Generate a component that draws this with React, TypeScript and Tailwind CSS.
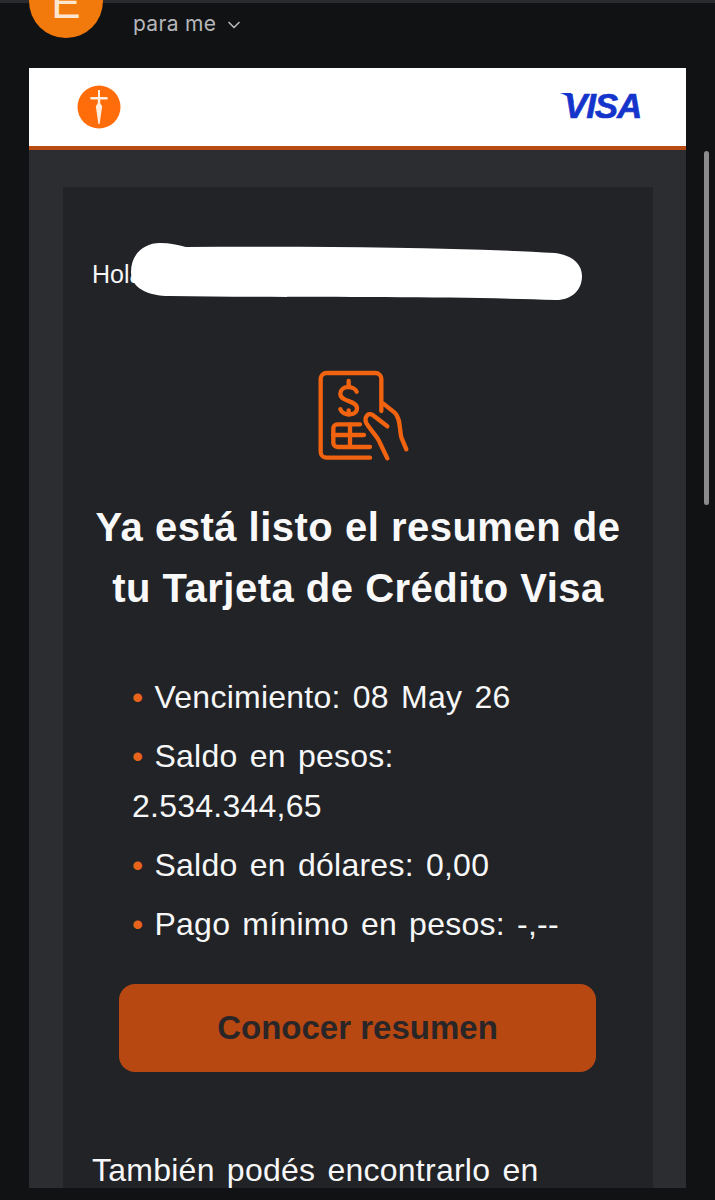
import { ChevronDown } from 'lucide-react';

function BankLogo() {
    return (
        <svg width="44" height="44" viewBox="0 0 44 44">
            <circle cx="22" cy="22" r="21.5" fill="#ff6d0a" />
            <path d="M21 5h2v7h6.5a1.3 1.3 0 0 1 0 2.6H23.2v3.6l2 3-2.6 17.8h-1.2l-2.6-17.8 2-3v-3.6H14.500a1.300 1.300 0 0 1 0-2.600H21z" fill="#ffeede" />
        </svg>
    );
}

function StatementIcon() {
    return (
        <svg width="120" height="110" viewBox="0 0 360 330" fill="none" stroke="#f2630f" strokeWidth="13" strokeLinecap="round" strokeLinejoin="round">
            <path d="M210 290H80a18 18 0 0 1-18-18V54a18 18 0 0 1 18-18h146a18 18 0 0 1 18 18v96" />
            <path d="M170 92c-8-18-48-20-49 6 0 27 50 18 50 44 0 24-42 24-50 3" />
            <path d="M146 60v14M146 160v-12" />
            <path d="M180 190h-68a12 12 0 0 0-12 12v44a12 12 0 0 0 12 12h98" />
            <path d="M100 222h92M150 190v68" />
            <path d="M262 196l-44-34c-14-9-28 8-18 26 12 20 34 40 40 58l22 46" />
            <path d="M250 128l34 27c18 16 14 50 20 74l15 36" />
        </svg>
    );
}

function InfoLine({ children }: { children: React.ReactNode }) {
    return (
        <p className="text-[32px] leading-[50px] tracking-[0.25px] text-[#f7f7f7] [word-spacing:3px]">
            <span className="mr-[11px] text-[#e8641c]">•</span>
            {children}
        </p>
    );
}

export default function App() {
    return (
        <div className="relative h-[1200px] w-[715px] overflow-hidden bg-[#111214] font-['Liberation_Sans',Arial,sans-serif]">
            <div className="h-[3px] bg-[#2a2b2f]" />

            <div className="flex h-[65px] items-start pl-[29px]">
                <div className="-mt-[39px] flex h-[74px] w-[74px] shrink-0 items-end justify-center rounded-full bg-[#f27a0c] pb-[13px]">
                    <span className="text-[44px] leading-none font-medium text-[#ffe6cf]">E</span>
                </div>
                <div className="mt-[7px] ml-[30px] flex items-center gap-[8px] font-['Inter',sans-serif] text-[21px] leading-7 tracking-[0.3px] text-[#b5b6b9]">
                    <span>para me</span>
                    <ChevronDown className="mt-[2px] h-[20px] w-[20px]" strokeWidth={2} />
                </div>
            </div>

            <div className="ml-[29px] h-[1120px] w-[657px] overflow-hidden bg-[#2b2d31]">
                <div className="flex h-[82px] items-center justify-between border-b-4 border-[#b84a14] bg-white pr-[45px] pl-[48px]">
                    <BankLogo />
                    <div className="relative -mt-[3px] text-[35px] leading-none font-bold tracking-[-1.2px] text-[#1434cb] italic [-webkit-text-stroke:0.6px_#1434cb]">
                        VISA
                        <svg className="absolute top-[5px] -left-[5px]" width="18" height="12" viewBox="0 0 18 12">
                            <path d="M1 0H12L15 10C12 5 7 2 1 0Z" fill="#1434cb" />
                        </svg>
                    </div>
                </div>

                <div className="mt-[37px] mr-[33px] ml-[34px] h-[1100px] bg-[#212327] px-[29px]">
                    <div className="relative pt-[60px] text-[25px] leading-[54px] text-[#f7f7f7]">
                        <span>Hola</span>
                        <svg className="absolute top-[53px] left-[38px]" width="456" height="66" viewBox="0 0 456 66">
                            <path d="M1 32C1 14 14 3 30 3 40 3 48 5 56 7 180 6 320 7 425 13 442 15 452 24 452 36 452 50 442 60 426 60 320 56 160 58 40 56 18 56 1 48 1 32Z" fill="#fff" />
                        </svg>
                    </div>

                    <div className="mt-[60px] flex justify-center pl-[4px]">
                        <StatementIcon />
                    </div>

                    <h1 className="mt-[26px] text-center text-[40px] leading-[61px] font-bold tracking-[0.5px] text-[#f9f9f9]">
                        Ya está listo el resumen de
                        <br />
                        tu Tarjeta de Crédito Visa
                    </h1>

                    <div className="mt-[53px] flex flex-col gap-[9px] pr-[40px] pl-[40px]">
                        <InfoLine>Vencimiento: 08 May 26</InfoLine>
                        <InfoLine>Saldo en pesos: 2.534.344,65</InfoLine>
                        <InfoLine>Saldo en dólares: 0,00</InfoLine>
                        <InfoLine>Pago mínimo en pesos: -,--</InfoLine>
                    </div>

                    <div className="mt-[35px] mr-[28px] ml-[27px] flex h-[88px] items-center justify-center rounded-2xl bg-[#b84812] text-[33px] font-bold text-[#2a2527]">
                        Conocer resumen
                    </div>

                    <p className="mt-[78px] text-[32px] leading-[40px] tracking-[0.25px] text-[#f7f7f7] [word-spacing:3px]">
                        También podés encontrarlo en
                    </p>
                </div>
            </div>

            <div className="absolute top-[151px] left-[704px] h-[354px] w-[5px] rounded-full bg-[#8b8b8d]" />
        </div>
    );
}
